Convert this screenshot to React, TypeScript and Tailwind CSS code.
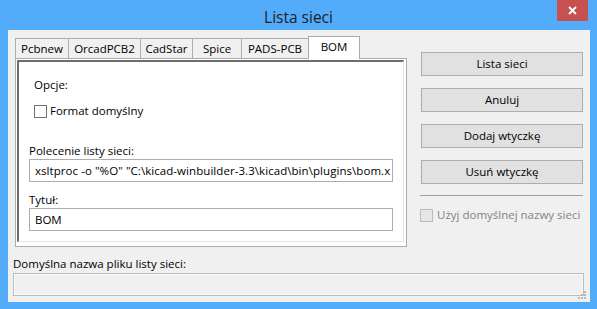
import React from 'react';

const tabs = [
  { label: 'Pcbnew', w: 'w-[54px]' },
  { label: 'OrcadPCB2', w: 'w-[73px]' },
  { label: 'CadStar', w: 'w-[53px]' },
  { label: 'Spice', w: 'w-[50px]' },
  { label: 'PADS-PCB', w: 'w-[68px]' },
];

const buttons = ['Lista sieci', 'Anuluj', 'Dodaj wtyczkę', 'Usuń wtyczkę'];

const App: React.FC = () => {
  return (
    <div className="w-[597px] h-[309px] bg-[#53acfa] flex flex-col font-['Open_Sans','Noto_Sans',sans-serif] text-[11.5px] text-black leading-[16px]">
      {/* Title bar */}
      <div className="h-[30px] relative flex items-center justify-center pt-[3px]">
        <span className="text-[15.5px] text-[#1e1e1e]">Lista sieci</span>
        <div className="absolute right-[9px] top-0 w-[31px] h-[21px] bg-[#c75050] flex items-center justify-center">
          <svg width="9" height="9" viewBox="0 0 9 9">
            <path d="M1 1 L8 8 M8 1 L1 8" stroke="#fff" strokeWidth="1.8" />
          </svg>
        </div>
      </div>

      {/* Client area */}
      <div className="ml-[8px] mr-[7px] mb-[7px] flex-1 bg-[#f0f0f0] flex flex-col relative">
        <div className="flex items-start">
          {/* Notebook */}
          <div className="ml-[7px] mt-[6px] w-[392px]">
            <div className="flex items-end h-[22px]">
              {tabs.map((t, i) => (
                <div
                  key={t.label}
                  className={`${t.w} h-[20px] border border-b-0 border-[#acacac] bg-[#f0f0f0] flex items-center justify-center ${i > 0 ? '-ml-px' : ''}`}
                >
                  {t.label}
                </div>
              ))}
              <div className="w-[52px] h-[23px] -ml-px -mb-px relative z-10 border border-b-0 border-[#acacac] bg-white flex items-start justify-center pt-[2px]">
                BOM
              </div>
            </div>
            <div className="h-[189px] border border-[#acacac] bg-white pt-px pl-px pr-[2px] pb-[4px]">
              <div className="h-full border-t-2 border-l-2 border-r border-b border-[#6d6d6d] border-r-[#e3e3e3] border-b-[#e3e3e3] px-[10px] flex flex-col">
                <div className="pl-[5px] mt-[15px]">Opcje:</div>
                <div className="pl-[5px] mt-[10px] flex items-center h-[16px]">
                  <div className="w-[13px] h-[13px] border border-[#707070] bg-white" />
                  <span className="ml-[3px]">Format domyślny</span>
                </div>
                <div className="mt-[24px]">Polecenie listy sieci:</div>
                <div className="h-[23px] border border-[#abadb3] bg-white px-[5px] flex items-center whitespace-nowrap tracking-[0.06px]">
                  xsltproc -o "%O" "C:\kicad-winbuilder-3.3\kicad\bin\plugins\bom.x
                </div>
                <div className="mt-[10px]">Tytuł:</div>
                <div className="h-[23px] border border-[#abadb3] bg-white px-[5px] flex items-center">
                  BOM
                </div>
              </div>
            </div>
          </div>

          {/* Right column */}
          <div className="ml-[13px] mt-[22px] w-[164px] flex flex-col">
            {buttons.map((b) => (
              <div
                key={b}
                className="ml-px w-[162px] h-[24px] mb-[12px] border border-[#adadad] bg-[#e1e1e1] flex items-center justify-center"
              >
                {b}
              </div>
            ))}
            <div className="w-[163px] h-px bg-[#a0a0a0] -mt-px" />
            <div className="mt-[12px] flex items-center h-[14px]">
              <div className="w-[13px] h-[13px] border border-[#bcbcbc] bg-[#e6e6e6]" />
              <span className="ml-[4px] text-[#838383]">Użyj domyślnej nazwy sieci</span>
            </div>
          </div>
        </div>

        {/* Bottom section */}
        <div className="ml-[5px] mt-[9px]">Domyślna nazwa pliku listy sieci:</div>
        <div className="ml-[5px] mt-px w-[571px] h-[23px] border border-[#bcbcbc] bg-[#f0f0f0] shadow-[inset_0_0_0_1px_#fafafa]" />

        {/* Resize grip */}
        <svg className="absolute right-[4px] bottom-[3px]" width="8" height="8" viewBox="0 0 8 8">
          <rect x="6" y="0" width="2" height="2" fill="#b8b8b8" />
          <rect x="3" y="3" width="2" height="2" fill="#b8b8b8" />
          <rect x="6" y="3" width="2" height="2" fill="#b8b8b8" />
          <rect x="0" y="6" width="2" height="2" fill="#b8b8b8" />
          <rect x="3" y="6" width="2" height="2" fill="#b8b8b8" />
          <rect x="6" y="6" width="2" height="2" fill="#b8b8b8" />
        </svg>
      </div>
    </div>
  );
};

export default App;
